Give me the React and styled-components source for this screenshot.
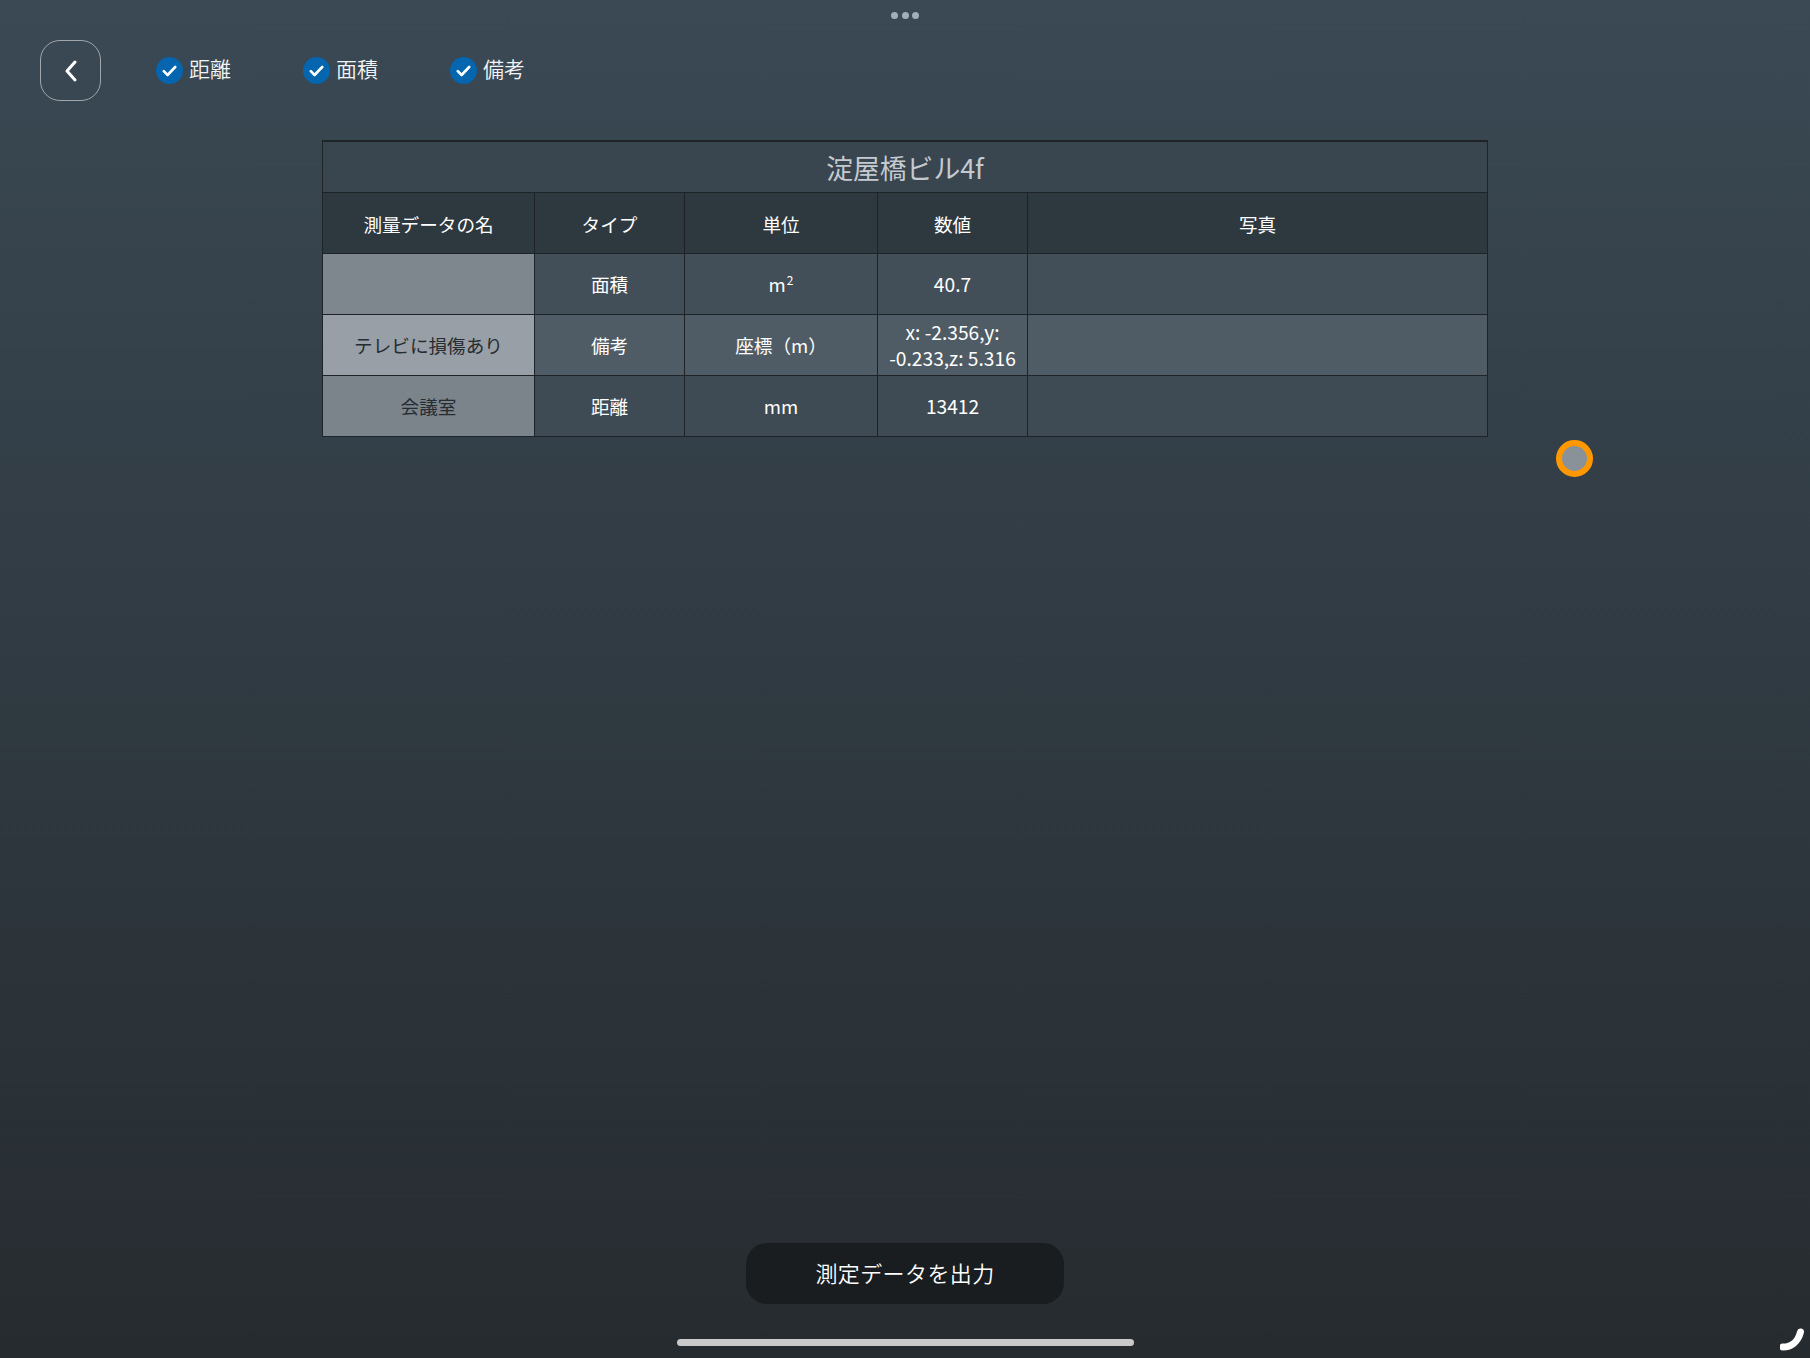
import React from "react";
import styled, { createGlobalStyle } from "styled-components";

const Global = createGlobalStyle`
  html, body { margin: 0; padding: 0; }
  body { font-family: "Noto Sans CJK JP", "Noto Sans", sans-serif; background: #262b2f; }
`;

const Page = styled.div`
  position: relative;
  width: 1810px;
  height: 1358px;
  overflow: hidden;
  display: flex;
  flex-direction: column;
  background: linear-gradient(180deg, #3a4954 0%, #262b2f 100%);
`;

const Grabber = styled.div`
  display: flex;
  justify-content: center;
  gap: 3.5px;
  padding-top: 12px;
  height: 28px;
  box-sizing: border-box;
`;

const Dot = styled.span`
  width: 7px;
  height: 7px;
  border-radius: 50%;
  background: #9fb0bb;
`;

const Toolbar = styled.div`
  display: flex;
  align-items: center;
  margin-top: 12px;
  padding-left: 40px;
`;

const BackButton = styled.button`
  width: 61px;
  height: 61px;
  padding: 0;
  box-sizing: border-box;
  border: 1px solid #a0a7ac;
  border-radius: 20px;
  background: transparent;
  display: flex;
  align-items: center;
  justify-content: center;
  margin-right: 55px;
`;

const Chip = styled.label`
  width: 147px;
  display: flex;
  align-items: center;
  gap: 6px;
  color: #f2f4f5;
  font-size: 21px;
  line-height: 28px;
  font-weight: 350;
`;

const ChipText = styled.span`
  margin-top: -5px;
`;

const CheckDisc = styled.span`
  width: 27px;
  height: 27px;
  border-radius: 50%;
  background: #0565ae;
  display: flex;
  align-items: center;
  justify-content: center;
`;

const Table = styled.table`
  width: 1166px;
  margin: 39px 0 0 322px;
  border-collapse: collapse;
  table-layout: fixed;
  color: #fff;
`;

const Title = styled.th`
  height: 50px;
  padding: 0;
  border: 1px solid #1d2327;
  border-top-width: 2px;
  background: #39454f;
  color: #c4cacf;
  font-size: 26.8px;
  font-weight: 400;
  text-align: center;
`;

const HeadCell = styled.th`
  height: 60px;
  padding: 0;
  border: 1px solid #1d2327;
  background: #2e383f;
  font-size: 18.6px;
  font-weight: 400;
  text-align: center;
`;

const Cell = styled.td`
  height: 61px;
  padding: 0 8px;
  box-sizing: border-box;
  border: 1px solid #1d2327;
  background: ${(p) => p.$bg};
  color: ${(p) => p.$fg || "#fff"};
  font-size: ${(p) => p.$size || "18.6px"};
  line-height: 26px;
  font-weight: 400;
  text-align: center;
`;

const Sup = styled.sup`
  font-size: 12px;
  line-height: 0;
  vertical-align: 7px;
  margin-left: 1px;
`;

const Marker = styled.div`
  position: absolute;
  left: 1556px;
  top: 440px;
  width: 37px;
  height: 37px;
  box-sizing: border-box;
  border: 6px solid #ff9800;
  border-radius: 50%;
  background: #8a9299;
`;

const Footer = styled.div`
  margin-top: auto;
  display: flex;
  flex-direction: column;
  align-items: center;
`;

const Export = styled.button`
  width: 318px;
  height: 61px;
  padding: 0 0 3px;
  border: none;
  border-radius: 21px;
  background: #191d20;
  color: #fff;
  font-family: inherit;
  font-size: 22px;
  font-weight: 350;
  letter-spacing: 0.4px;
`;

const HomeBar = styled.div`
  width: 457px;
  height: 7px;
  margin: 35px 0 12px;
  border-radius: 4px;
  background: #c9c9c9;
`;

const Corner = styled.svg`
  position: absolute;
  right: 4px;
  bottom: 7px;
`;

const Check = () => (
  <svg width="15" height="12" viewBox="0 0 15 12" fill="none">
    <path d="M1.8 6.2 L5.6 10 L13.2 2" stroke="#fff" strokeWidth="2.6" strokeLinecap="round" strokeLinejoin="round" />
  </svg>
);

const rows = [
  { name: "", nameBg: "#7e868e", bg: "#434f58", type: "面積", unit: <>m<Sup>2</Sup></>, value: "40.7" },
  { name: "テレビに損傷あり", nameBg: "#989fa7", bg: "#505c65", type: "備考", unit: "座標（m）", value: <>x: -2.356,y:<br />-0.233,z: 5.316</> },
  { name: "会議室", nameBg: "#7b838b", bg: "#3f4b54", type: "距離", unit: "mm", value: "13412" },
];

export default function App() {
  return (
    <Page>
      <Global />
      <Grabber><Dot /><Dot /><Dot /></Grabber>
      <Toolbar>
        <BackButton aria-label="back">
          <svg width="14" height="22" viewBox="0 0 14 22" fill="none">
            <path d="M11 2 L3 11 L11 20" stroke="#fff" strokeWidth="3" strokeLinecap="round" strokeLinejoin="round" />
          </svg>
        </BackButton>
        {["距離", "面積", "備考"].map((t) => (
          <Chip key={t}><CheckDisc><Check /></CheckDisc><ChipText>{t}</ChipText></Chip>
        ))}
      </Toolbar>
      <Table>
        <colgroup>
          <col style={{ width: 212 }} />
          <col style={{ width: 150 }} />
          <col style={{ width: 193 }} />
          <col style={{ width: 150 }} />
          <col />
        </colgroup>
        <thead>
          <tr><Title colSpan={5}>淀屋橋ビル4f</Title></tr>
          <tr>
            {["測量データの名", "タイプ", "単位", "数値", "写真"].map((h) => <HeadCell key={h}>{h}</HeadCell>)}
          </tr>
        </thead>
        <tbody>
          {rows.map((r) => (
            <tr key={r.type}>
              <Cell $bg={r.nameBg} $fg="#262d32">{r.name}</Cell>
              <Cell $bg={r.bg}>{r.type}</Cell>
              <Cell $bg={r.bg}>{r.unit}</Cell>
              <Cell $bg={r.bg} $size="19.2px">{r.value}</Cell>
              <Cell $bg={r.bg} />
            </tr>
          ))}
        </tbody>
      </Table>
      <Marker />
      <Footer>
        <Export>測定データを出力</Export>
        <HomeBar />
      </Footer>
      <Corner width="26" height="24" viewBox="0 0 26 24" fill="none">
        <path d="M3 20 C11 20 18 15 20.5 5" stroke="#fff" strokeWidth="7" strokeLinecap="round" />
      </Corner>
    </Page>
  );
}
